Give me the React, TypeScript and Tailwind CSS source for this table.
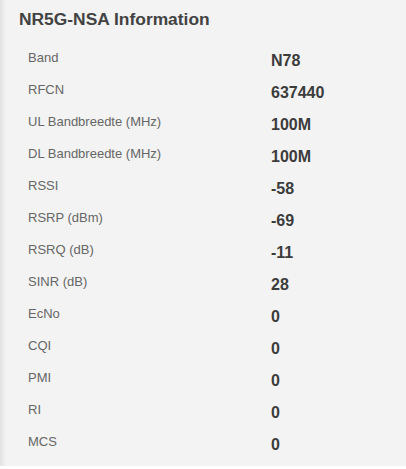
const rows: [string, string][] = [
  ["Band", "N78"],
  ["RFCN", "637440"],
  ["UL Bandbreedte (MHz)", "100M"],
  ["DL Bandbreedte (MHz)", "100M"],
  ["RSSI", "-58"],
  ["RSRP (dBm)", "-69"],
  ["RSRQ (dB)", "-11"],
  ["SINR (dB)", "28"],
  ["EcNo", "0"],
  ["CQI", "0"],
  ["PMI", "0"],
  ["RI", "0"],
  ["MCS", "0"],
];

export default function App() {
  return (
    <div className="w-[406px] h-[469px] bg-white overflow-hidden" style={{ fontFamily: '"Liberation Sans", Arial, sans-serif' }}>
      <div className="relative h-[466px] bg-[#f3f3f3] pl-[19px] pt-[7px]">
        {/* left shadow edge */}
        <div className="absolute left-0 top-0 bottom-0 w-[6px] bg-gradient-to-r from-[#e2e2e2] to-[#f3f3f3]" />
        <h2 className="relative text-[17.4px] leading-[24px] font-bold text-[#424242]">NR5G-NSA Information</h2>
        <div className="relative mt-[16px] pl-[9px]">
          {rows.map(([label, value]) => (
            <div key={label} className="flex h-8 items-start">
              <div className="w-[243px] text-[13px] leading-[20px] text-[#666] pt-[1px]">{label}</div>
              <div className="text-[16px] leading-[20px] font-bold text-[#3c3c3c] pt-[4px]">{value}</div>
            </div>
          ))}
        </div>
      </div>
    </div>
  );
}
